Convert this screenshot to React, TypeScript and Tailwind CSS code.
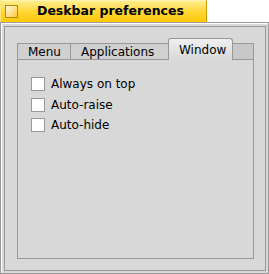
export default function App() {
  const font = { fontFamily: '"DejaVu Sans", "Liberation Sans", sans-serif' };
  const boxes = ["Always on top", "Auto-raise", "Auto-hide"];
  return (
    <div className="w-[269px] h-[274px] bg-white flex flex-col" style={font}>
      {/* title tab */}
      <div className="w-[207px] h-[22px] flex items-center border border-b-0 border-t-[#fff3b0] border-l-[#ffe680] border-r-[#c89a00] bg-gradient-to-b from-[#ffec8a] via-[#ffd730] to-[#ffc800]">
        <div className="ml-[4px] w-[13px] h-[13px] border border-[#b08a00] bg-gradient-to-br from-[#fffbe0] to-[#ffc800]" />
        <div className="ml-[19px] text-[12.5px] font-bold text-black leading-none">Deskbar preferences</div>
      </div>
      {/* window frame */}
      <div className="h-[252px] border border-[#9a9a9a] bg-[#d8d8d8] flex flex-col">
        <div className="flex-1 border-t border-l border-t-white border-l-white p-[2px] flex flex-col">
          <div className="flex-1 border border-[#989898] bg-[#d8d8d8] pl-[12px] pr-[11px] pt-[11px] pb-[11px] flex flex-col">
            <div className="flex-1 flex flex-col">
              <div className="flex items-end h-[22px] text-[12px] text-black">
                <div className="w-[53px] h-[17px] border border-r-0 border-[#989898] bg-[#d0d0d0] flex items-center pl-[10px] leading-none">Menu</div>
                <div className="w-[98px] h-[17px] border border-r-0 border-[#989898] bg-[#d0d0d0] flex items-center pl-[10px] leading-none">Applications</div>
                <div className="w-[65px] h-[22px] border border-b-0 border-[#989898] rounded-t-[3px] bg-gradient-to-b from-[#efefef] to-[#d8d8d8] flex items-center pl-[10px] leading-none">Window</div>
                <div className="flex-1 h-[17px] border border-l-0 border-[#989898] bg-[#c8c8c8]" />
              </div>
              <div className="flex-1 border border-t-0 border-[#989898] bg-[#d8d8d8] pt-[14px] pl-[13px] flex flex-col text-[12px] text-black">
                {boxes.map((b) => (
                  <div key={b} className="h-[20.5px] flex items-center">
                    <div className="w-[14px] h-[14px] border border-[#989898] bg-white" />
                    <span className="ml-[6px] leading-none">{b}</span>
                  </div>
                ))}
              </div>
            </div>
          </div>
        </div>
      </div>
    </div>
  );
}
